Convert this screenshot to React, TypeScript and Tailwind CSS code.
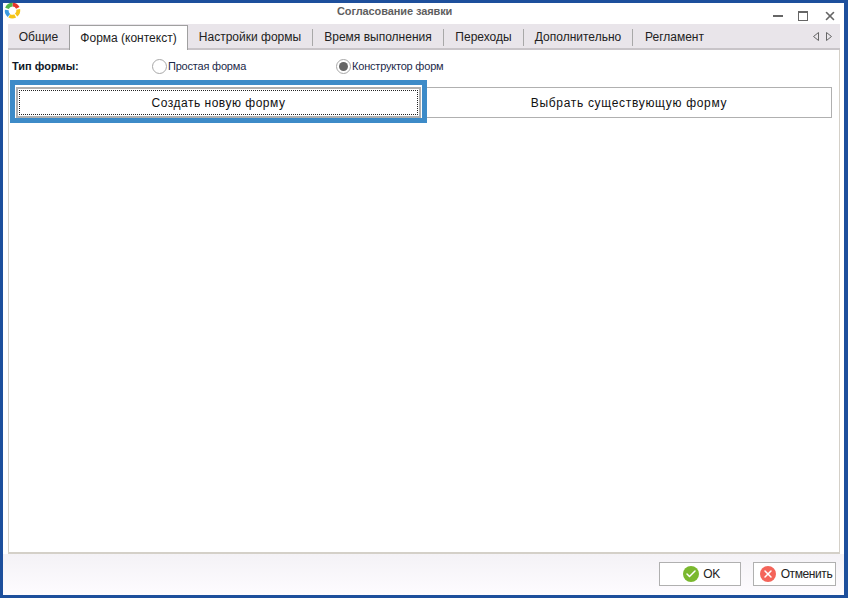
import React from 'react';
import { Check, X } from 'lucide-react';

const font = "font-['Liberation_Sans',Arial,sans-serif]";

const tabs = [
    { label: 'Настройки формы', w: 'w-[125px]' },
    { label: 'Время выполнения', w: 'w-[131px]' },
    { label: 'Переходы', w: 'w-[80px]' },
    { label: 'Дополнительно', w: 'w-[109px]' },
    { label: 'Регламент', w: 'w-[83px]' },
];

const Logo = () => (
    <svg width="17" height="17" viewBox="0 0 16 16" fill="none" strokeWidth="3.6">
        <path d="M8 2.5a5.5 5.5 0 0 1 5 3" stroke="#e8352c" />
        <path d="M13.4 7a5.5 5.5 0 0 1-2 5.3" stroke="#f5c518" />
        <path d="M10.5 13a5.5 5.5 0 0 1-5.5 0" stroke="#f5c518" />
        <path d="M4.6 12.6a5.5 5.5 0 0 1-2-5" stroke="#3d9be0" />
        <path d="M2.8 6a5.5 5.5 0 0 1 5.2-3.5" stroke="#55b848" />
    </svg>
);

const Radio = ({ checked, label, w }: { checked?: boolean; label: string; w: string }) => (
    <div className={`flex items-center ${w}`}>
        <span className="flex h-[15px] w-[15px] shrink-0 items-center justify-center rounded-full border border-[#a8a8a8] bg-white">
            {checked && <span className="h-[9px] w-[9px] rounded-full bg-[#666666]" />}
        </span>
        <span className="ml-px text-[11px] leading-none tracking-[-0.2px] text-[#1c2a4a]">{label}</span>
    </div>
);

export default function App() {
    return (
        <div className={`${font} flex h-[598px] w-[848px] flex-col border-t-[3px] border-r-4 border-b-[3px] border-l-[3px] border-[#1d4f9c] bg-white`}>
            {/* Title bar */}
            <div className="relative flex h-[21px] shrink-0 items-start pl-[334px]">
                <div className="absolute top-[-1px] left-px"><Logo /></div>
                <span className="text-[11px] leading-[16px] font-bold tracking-[-0.1px] text-[#5f5f5f]">Согласование заявки</span>
                <div className="absolute top-0 right-0 flex h-full items-center">
                    <span className="mr-[15px] mt-[4px] h-[2px] w-[10px] bg-[#666666]" />
                    <span className="mr-[15px] mt-[4px] h-[10px] w-[10px] border border-t-2 border-[#666666]" />
                    <X size={14} strokeWidth={2.8} className="mr-[7px] mt-[4px] text-[#666666]" />
                </div>
            </div>

            {/* Tabs */}
            <div className="ml-[5px] flex h-[26px] w-[832px] shrink-0 items-end border-b-2 border-[#c8c4c8] bg-[#e9e5ea] text-[12px] text-[#222222]">
                <div className="flex h-full w-[61px] items-center justify-center pt-[2px]">Общие</div>
                <div className="z-10 mb-[-2px] flex h-[25px] w-[119px] items-center justify-center border border-b-0 border-[#a0a0a0] bg-white">Форма (контекст)</div>
                {tabs.map((tab, i) => (
                    <div key={tab.label} className={`flex h-full items-center justify-center pt-[2px] ${tab.w}`}>
                        <span className="flex-1 text-center">{tab.label}</span>
                        {i < 4 && <span className="h-[17px] w-px bg-[#a8a8a8]" />}
                    </div>
                ))}
                <div className="ml-auto flex h-full items-center gap-[7px] pr-[8px] pt-[1px]">
                    <svg width="6" height="9" viewBox="0 0 6 9" fill="none" stroke="#666666"><path d="M5.5 .5v8L.5 4.5z" /></svg>
                    <svg width="6" height="9" viewBox="0 0 6 9" fill="none" stroke="#666666"><path d="M.5 .5v8l5-4z" /></svg>
                </div>
            </div>

            {/* Panel */}
            <div className="ml-[5px] flex w-[832px] flex-1 flex-col border border-t-0 border-b-2 border-[#d4d0c8] bg-white pt-[7px]">
                <div className="flex h-[18px] items-center pl-[3px]">
                    <span className="w-[140px] text-[11px] font-bold text-[#111827]">Тип формы:</span>
                    <Radio label="Простая форма" w="w-[184px]" />
                    <Radio checked label="Конструктор форм" w="w-[140px]" />
                </div>
                <div className="ml-px mt-[5px] flex items-start text-[12px] text-[#111111]">
                    <div className="h-[43px] w-[417px] shrink-0 border-[5px] border-[#3d8bc8] px-px pt-[2px]">
                        <div className="h-[31px] w-[405px] border-2 border-[#b0b0b0] p-px">
                            <div className="flex h-full items-center justify-center border border-dotted border-[#222222] tracking-[0.5px]">Создать новую форму</div>
                        </div>
                    </div>
                    <div className="mt-[7px] flex h-[31px] w-[405px] items-center justify-center border border-l-0 border-[#b0b0b0] tracking-[0.68px]">Выбрать существующую форму</div>
                </div>
            </div>

            {/* Footer */}
            <div className="flex h-[41px] shrink-0 justify-end gap-[12px] bg-gradient-to-b from-[#f4f2f6] to-[#fefcff] pt-[8px] pr-[8px] text-[12px] text-[#222222]">
                <button className="flex h-[24px] w-[82px] items-center justify-center gap-[4px] border border-[#b0b0b0] bg-white pl-[3px]">
                    <span className="flex h-[16px] w-[16px] items-center justify-center rounded-full bg-[#7ab82e]">
                        <Check size={12} strokeWidth={3} className="text-white" />
                    </span>
                    <span className="tracking-[-0.3px]">OK</span>
                </button>
                <button className="flex h-[24px] w-[83px] items-center justify-center gap-[5px] border border-[#b0b0b0] bg-white pl-[3px]">
                    <span className="flex h-[16px] w-[16px] items-center justify-center rounded-full bg-[#f4645a]">
                        <X size={12} strokeWidth={3} className="text-white" />
                    </span>
                    <span className="tracking-[-0.4px]">Отменить</span>
                </button>
            </div>
        </div>
    );
}
